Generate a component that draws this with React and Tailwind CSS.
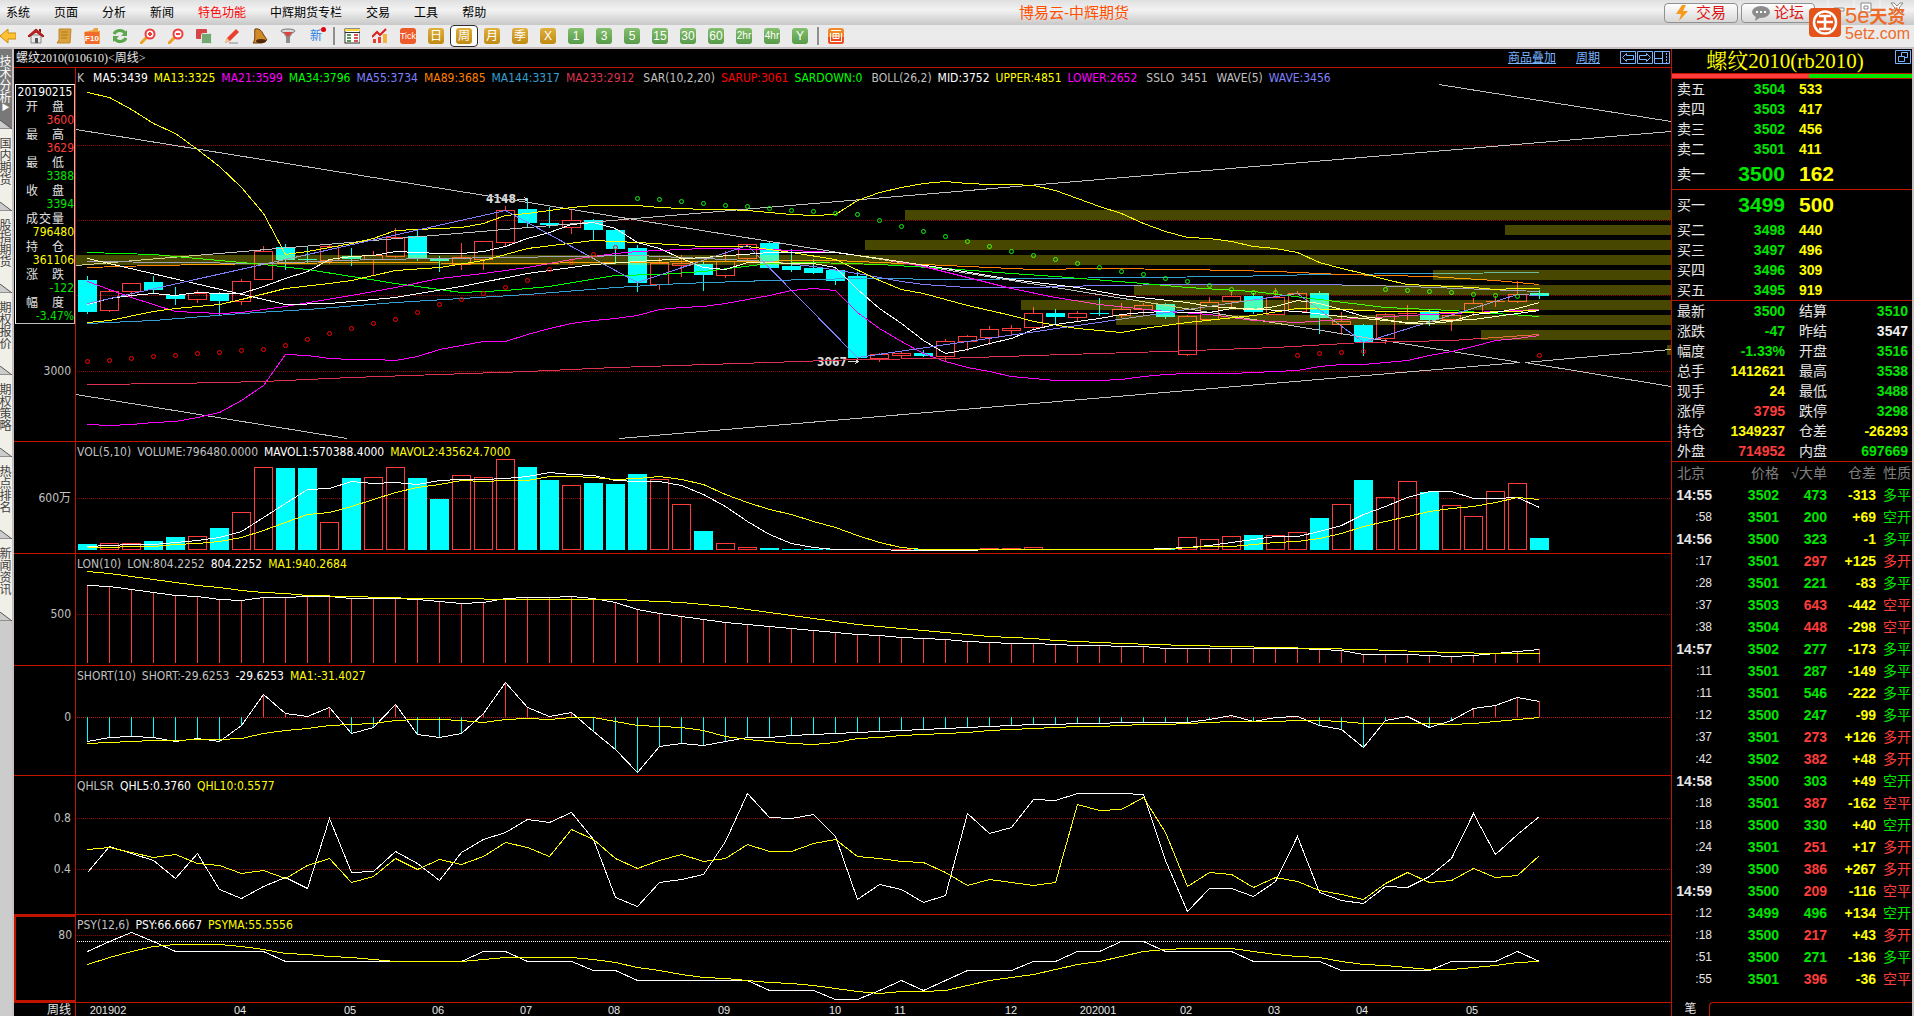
import React, { useState } from "react";
import clsx from "clsx";

const menus = ["系统", "页面", "分析", "新闻", "特色功能", "中辉期货专栏", "交易", "工具", "帮助"];
const sideTabs = ["技术分析", "国内期货", "股指期货", "期权报价", "期权策略", "热点排名", "新闻资讯"];
const goldPeriods = ["日", "周", "月", "季", "X"];
const greenPeriods = ["1", "3", "5", "15", "30", "60", "2hr", "4hr", "Y"];

// x of bar i
const barX = (i) => 87.5 + 22 * i;

// [top, bottom, high, low, 1 = up]
const candles = [
  [280, 312, 276, 313, 0], [291, 310, 290, 311, 1], [283, 291, 283, 297, 1], [282, 290, 276, 293, 0],
  [295, 299, 287, 304, 0], [293, 299, 290, 302, 1], [294, 301, 292, 314, 0], [281, 301, 279, 304, 1],
  [251, 279, 246, 279, 1], [247, 260, 244, 269, 0], [259, 260, 247, 262, 0], [246, 260, 244, 263, 1],
  [256, 259, 248, 265, 0], [255, 259, 251, 275, 1], [237, 256, 228, 257, 1], [236, 258, 231, 260, 0],
  [259, 261, 256, 271, 0], [257, 264, 243, 269, 1], [241, 259, 241, 269, 1], [210, 242, 206, 246, 1],
  [209, 223, 198, 226, 0], [223, 225, 207, 227, 0], [220, 227, 210, 233, 1], [220, 230, 219, 239, 0],
  [230, 249, 228, 263, 0], [248, 283, 245, 291, 0], [263, 284, 258, 289, 1], [263, 265, 255, 276, 1],
  [264, 275, 262, 290, 0], [261, 275, 251, 277, 1], [244, 258, 244, 260, 1], [243, 268, 241, 268, 0],
  [266, 270, 249, 271, 0], [268, 273, 259, 273, 0], [270, 281, 268, 284, 0], [276, 358, 272, 362, 0],
  [354, 358, 353, 361, 1], [353, 355, 351, 357, 1], [353, 356, 350, 356, 0], [341, 356, 339, 360, 1],
  [336, 341, 335, 350, 1], [329, 337, 326, 344, 1], [328, 330, 325, 335, 1], [313, 327, 307, 329, 1],
  [313, 317, 309, 324, 0], [313, 317, 311, 321, 1], [313, 314, 298, 315, 0], [309, 315, 303, 317, 1],
  [305, 309, 303, 315, 1], [304, 317, 303, 318, 0], [316, 354, 315, 355, 1], [302, 319, 297, 319, 1],
  [296, 301, 292, 306, 1], [296, 312, 293, 313, 0], [297, 314, 288, 314, 1], [293, 311, 291, 311, 1],
  [293, 318, 291, 333, 0], [321, 324, 312, 334, 1], [325, 342, 324, 355, 0], [314, 338, 313, 343, 1],
  [313, 314, 305, 319, 1], [311, 320, 310, 325, 0], [315, 319, 313, 330, 1], [303, 312, 298, 315, 1],
  [301, 302, 296, 306, 1], [294, 301, 281, 302, 1], [293, 296, 290, 298, 0],
];

const volumes = [
  544, 543, 543, 541, 537, 536, 528, 512, 467, 468, 468, 522, 478, 477, 467, 478, 499, 475, 477, 459, 467, 480,
  485, 483, 484, 474, 479, 504, 531, 543, 547, 548, 549, 549, 549, 549, 549, 549, 549, 549, 549, 548, 548, 547,
  549, 549, 549, 549, 549, 549, 537, 539, 536, 535, 535, 532, 518, 504, 480, 497, 481, 492, 505, 516, 491, 483, 538,
];

const mainLines = [
  ["#ff00ff", [424, 425, 424, 422, 421, 417, 412, 400, 385, 354, 355, 358, 359, 359, 360, 356, 349, 345, 341, 341, 334, 328, 323, 320, 318, 315, 309, 307, 306, 303, 299, 295, 290, 288, 290, 312, 328, 341, 353, 361, 367, 371, 376, 378, 380, 380, 380, 379, 376, 374, 373, 373, 373, 372, 371, 370, 366, 364, 364, 362, 360, 355, 351, 346, 340, 338, 335]],
  ["#dc3250", { 0: 384, 4: 383, 8: 381, 12: 377, 16: 374, 20: 371, 24: 367, 31: 362, 35: 359, 39: 358, 43: 355, 49: 351, 54: 347, 58: 342, 62: 340, 66: 334 }],
  ["#32a0d2", { 0: 323, 3: 320, 7: 313, 10: 309, 14: 302, 17: 298, 20: 294, 24: 287, 27: 283, 31: 280, 35: 278, 40: 279, 43: 278, 48: 277, 52: 276, 56: 274, 61: 273, 66: 272 }],
  ["#ff8000", { 0: 267, 3: 265, 8: 263, 13: 262, 19: 263, 24: 262, 29: 261, 34: 260, 38: 264, 41: 267, 43: 269, 46: 268, 50: 269, 54: 271, 57: 274, 61: 276, 64: 280, 66: 284 }],
  ["#8080ff", { 0: 261, 8: 263, 13: 259, 25: 255, 28: 258, 31: 261, 33: 266, 35: 273, 37: 281, 38: 284, 40: 287, 43: 287, 46: 285, 50: 284, 56: 284, 60: 286, 66: 291 }],
  ["#00ff00", { 0: 252, 3: 254, 6: 260, 8: 264, 10: 269, 12: 276, 14: 283, 17: 292, 19: 290, 21: 286, 24: 275, 26: 274, 28: 271, 31: 263, 33: 262, 36: 264, 39: 268, 42: 273, 44: 276, 48: 283, 50: 287, 53: 291, 56: 299, 59: 307, 62: 310, 66: 316 }],
  ["#ff00ff", { 0: 281, 2: 297, 4: 311, 6: 313, 7: 312, 9: 306, 12: 295, 14: 287, 16: 278, 18: 273, 20: 267, 22: 259, 24: 253, 25: 251, 28: 248, 31: 249, 34: 252, 36: 258, 38: 266, 40: 277, 42: 288, 44: 297, 46: 304, 49: 311, 51: 314, 53: 320, 55: 322, 57: 319, 60: 315, 63: 312, 66: 309 }],
  ["#ffff00", { 0: 322, 1: 320, 3: 311, 4: 308, 6: 304, 7: 299, 9: 288, 11: 283, 12: 280, 14: 270, 16: 267, 18: 260, 20: 248, 23: 240, 25: 242, 28: 246, 30: 246, 32: 252, 34: 259, 36: 280, 37: 289, 38: 293, 40: 305, 42: 315, 43: 321, 45: 328, 47: 332, 48: 328, 50: 322, 53: 315, 55: 308, 57: 309, 59: 311, 63: 312, 66: 310 }],
  ["#ffffff", { 0: 258, 9: 304, 11: 303, 14: 297, 17: 286, 20: 273, 23: 264, 25: 261, 28: 257, 31: 252, 34: 252, 36: 258, 39: 268, 42: 279, 45: 287, 47: 295, 50: 302, 51: 306, 55: 311, 57: 316, 60: 322, 63: 319, 66: 310 }],
  ["#ffffff", [304, 298, 295, 293, 295, 292, 293, 293, 286, 278, 271, 259, 256, 255, 251, 252, 253, 253, 251, 246, 238, 232, 224, 222, 228, 242, 248, 258, 267, 269, 262, 262, 263, 263, 267, 289, 308, 323, 340, 353, 349, 343, 338, 329, 324, 321, 318, 314, 312, 311, 312, 312, 308, 309, 306, 300, 303, 309, 316, 319, 323, 323, 321, 314, 312, 308, 302]],
  ["#ffff00", [92, 97, 109, 123, 133, 149, 166, 187, 213, 254, 251, 247, 243, 238, 230, 229, 228, 227, 223, 215, 213, 210, 207, 205, 205, 205, 207, 208, 209, 209, 210, 212, 214, 215, 214, 200, 192, 187, 183, 181, 183, 184, 184, 185, 190, 198, 206, 213, 223, 231, 237, 238, 241, 246, 248, 252, 262, 268, 273, 279, 284, 285, 286, 287, 289, 288, 288]],
  ["#8080ff", { 0: 303, 19: 210, 25: 282, 30: 245, 35: 357, 55: 293, 58: 342, 65: 294, 66: 295 }],
];

const trendLines = [
  [76, 129, 1520, 362], [1525, 362, 1671, 386], [76, 265, 1671, 131], [1439, 84, 1671, 121],
  [76, 394, 347, 438], [619, 438, 1520, 362], [1525, 362, 1671, 349],
];

// [left, top] of each price band
const bands = [
  [905, 210], [1505, 225], [865, 240], [76, 255], [1433, 270], [1134, 285], [1021, 300], [1116, 315], [1481, 330], [1667, 345],
];

const sarUp = {
  0: 361, 1: 360, 2: 358, 3: 356, 4: 355, 5: 353, 6: 352, 7: 350, 8: 349, 9: 345, 10: 339, 11: 333, 12: 328, 13: 323,
  14: 319, 15: 312, 16: 304, 17: 299, 18: 293, 19: 287, 20: 280, 21: 269, 22: 262, 23: 254, 24: 247,
  55: 355, 56: 353, 57: 352, 58: 351, 66: 355,
};
const sarDown = {
  25: 198, 26: 199, 27: 201, 28: 203, 29: 205, 30: 206, 31: 208, 32: 210, 33: 211, 34: 213, 35: 214, 36: 220, 37: 226,
  38: 231, 39: 236, 40: 241, 41: 246, 42: 251, 43: 255, 44: 259, 45: 263, 46: 267, 47: 271, 48: 274, 49: 278, 50: 281,
  51: 285, 52: 289, 53: 292, 54: 292, 59: 289, 60: 290, 61: 291, 62: 292, 63: 294, 64: 295, 65: 296,
};

const mavol1 = [546, 545, 544, 544, 542, 540, 537, 531, 517, 503, 489, 488, 481, 483, 482, 484, 480, 479, 479, 478, 476, 472, 474, 475, 480, 481, 481, 485, 494, 506, 521, 534, 543, 547, 549, 549, 549, 550, 550, 550, 550, 549, 549, 549, 549, 549, 549, 549, 549, 548, 547, 545, 542, 539, 536, 536, 531, 525, 514, 506, 497, 491, 491, 498, 498, 497, 507];
const mavol2 = [547, 547, 546, 546, 544, 543, 541, 537, 530, 522, 514, 512, 506, 499, 492, 487, 484, 480, 481, 480, 480, 476, 476, 477, 479, 478, 476, 479, 484, 494, 502, 509, 514, 521, 527, 535, 542, 547, 549, 549, 549, 549, 549, 549, 549, 549, 549, 549, 549, 549, 547, 546, 546, 544, 542, 541, 538, 533, 526, 521, 516, 511, 508, 506, 502, 497, 499];
const lon = [585, 586, 589, 592, 595, 596, 599, 600, 597, 597, 596, 596, 598, 598, 598, 599, 601, 603, 602, 598, 597, 597, 596, 598, 602, 609, 613, 616, 619, 622, 624, 626, 628, 630, 632, 634, 635, 637, 638, 639, 641, 642, 643, 643, 644, 645, 645, 646, 646, 648, 648, 648, 648, 648, 648, 648, 649, 650, 654, 654, 654, 655, 656, 655, 653, 651, 649];
const lonMa = { 0: 571, 1: 573, 2: 576, 3: 579, 4: 582, 5: 585, 6: 587, 7: 590, 8: 592, 9: 593, 10: 595, 12: 596, 15: 598, 17: 598, 19: 599, 24: 599, 25: 600, 27: 602, 28: 604, 29: 606, 30: 609, 31: 612, 32: 615, 33: 618, 34: 621, 35: 624, 36: 626, 37: 628, 38: 630, 39: 632, 40: 634, 41: 636, 43: 638, 44: 640, 47: 643, 50: 645, 56: 648, 58: 649, 62: 652, 64: 653, 66: 653 };
const short = [741, 737, 736, 737, 741, 738, 741, 725, 694, 713, 716, 707, 733, 727, 704, 734, 737, 733, 713, 682, 707, 716, 712, 731, 749, 772, 746, 743, 745, 741, 737, 737, 735, 734, 733, 732, 731, 730, 729, 728, 727, 726, 725, 724, 724, 723, 723, 722, 722, 722, 722, 719, 715, 721, 717, 716, 725, 729, 747, 720, 716, 727, 720, 708, 705, 697, 701];
const shortMa = [743, 742, 741, 740, 740, 739, 739, 738, 733, 730, 728, 725, 724, 723, 720, 719, 719, 720, 722, 719, 718, 719, 717, 717, 721, 725, 726, 727, 730, 736, 739, 741, 743, 744, 742, 738, 737, 735, 734, 733, 732, 730, 729, 728, 727, 726, 726, 725, 724, 724, 723, 722, 721, 721, 721, 720, 720, 721, 723, 723, 723, 723, 724, 723, 721, 719, 717];
const qhl5 = [872, 846, 853, 860, 878, 853, 889, 898, 886, 877, 888, 818, 872, 871, 851, 863, 880, 852, 839, 832, 819, 822, 812, 839, 897, 906, 882, 879, 874, 841, 793, 817, 818, 814, 836, 899, 884, 889, 902, 895, 813, 833, 827, 799, 800, 793, 793, 793, 794, 860, 911, 888, 888, 896, 881, 836, 892, 900, 903, 886, 887, 876, 858, 813, 854, 834, 816];
const qhl10 = [849, 847, 852, 857, 854, 863, 865, 873, 870, 878, 865, 858, 882, 876, 858, 869, 859, 864, 856, 842, 847, 856, 829, 839, 858, 868, 860, 854, 861, 858, 844, 851, 851, 843, 839, 856, 858, 861, 862, 872, 885, 879, 882, 885, 882, 804, 810, 809, 797, 832, 886, 872, 874, 887, 877, 881, 890, 894, 899, 883, 872, 882, 880, 868, 877, 875, 855];
const psy = { 0: 951, 1: 941, 2: 932, 3: 941, 4: 951, 8: 951, 9: 961, 17: 961, 18: 951, 19: 951, 20: 961, 22: 961, 23: 970, 24: 970, 25: 980, 30: 980, 31: 990, 33: 990, 34: 999, 35: 999, 36: 990, 37: 980, 38: 990, 39: 980, 40: 970, 42: 970, 43: 961, 44: 961, 45: 951, 46: 951, 47: 941, 48: 941, 49: 951, 52: 951, 53: 961, 56: 961, 57: 970, 61: 970, 62: 961, 64: 961, 65: 951, 66: 961 };
const psyMa = [964, 957, 951, 946, 944, 944, 944, 946, 949, 953, 954, 956, 957, 959, 961, 961, 961, 961, 959, 957, 957, 957, 957, 959, 962, 967, 970, 974, 977, 978, 980, 982, 983, 985, 988, 991, 993, 991, 991, 990, 985, 980, 977, 974, 969, 964, 961, 956, 951, 949, 948, 948, 948, 951, 954, 956, 957, 961, 964, 965, 967, 969, 969, 967, 965, 962, 961];

const info = [
  ["开盘", "3600", "text-[#ff3c3c]"],
  ["最高", "3629", "text-[#ff3c3c]"],
  ["最低", "3388", "text-[#00e600]"],
  ["收盘", "3394", "text-[#00e600]"],
  ["成交量", "796480", "text-[#ffff00]"],
  ["持仓", "361106", "text-[#ffff00]"],
  ["涨跌", "-122", "text-[#00e600]"],
  ["幅度", "-3.47%", "text-[#00e600]"],
];

const asks = [["卖五", "3504", "533"], ["卖四", "3503", "417"], ["卖三", "3502", "456"], ["卖二", "3501", "411"], ["卖一", "3500", "162"]];
const bids = [["买一", "3499", "500"], ["买二", "3498", "440"], ["买三", "3497", "496"], ["买四", "3496", "309"], ["买五", "3495", "919"]];

const G = "text-[#00e600]";
const R = "text-[#ff3c3c]";
const Y = "text-[#ffff00]";
const W = "text-[#f0f0f0]";

const stats = [
  ["最新", "3500", G, "结算", "3510", G],
  ["涨跌", "-47", G, "昨结", "3547", W],
  ["幅度", "-1.33%", G, "开盘", "3516", G],
  ["总手", "1412621", Y, "最高", "3538", G],
  ["现手", "24", Y, "最低", "3488", G],
  ["涨停", "3795", R, "跌停", "3298", G],
  ["持仓", "1349237", Y, "仓差", "-26293", Y],
  ["外盘", "714952", R, "内盘", "697669", G],
];

const ticks = [
  ["14:55", "3502", "473", "-313", "多平", G], [":58", "3501", "200", "+69", "空开", G],
  ["14:56", "3500", "323", "-1", "多平", G], [":17", "3501", "297", "+125", "多开", R],
  [":28", "3501", "221", "-83", "多平", G], [":37", "3503", "643", "-442", "空平", R],
  [":38", "3504", "448", "-298", "空平", R], ["14:57", "3502", "277", "-173", "多平", G],
  [":11", "3501", "287", "-149", "多平", G], [":11", "3501", "546", "-222", "多平", G],
  [":12", "3500", "247", "-99", "多平", G], [":37", "3501", "273", "+126", "多开", R],
  [":42", "3502", "382", "+48", "多开", R], ["14:58", "3500", "303", "+49", "空开", G],
  [":18", "3501", "387", "-162", "空平", R], [":18", "3500", "330", "+40", "空开", G],
  [":24", "3501", "251", "+17", "多开", R], [":39", "3500", "386", "+267", "多开", R],
  ["14:59", "3500", "209", "-116", "空平", R], [":12", "3499", "496", "+134", "空开", G],
  [":18", "3500", "217", "+43", "多开", R], [":51", "3500", "271", "-136", "多平", G],
  [":55", "3501", "396", "-36", "空平", R],
];

const months = [
  [108, "201902"], [240, "04"], [350, "05"], [438, "06"], [526, "07"], [614, "08"], [724, "09"], [835, "10"],
  [900, "11"], [1011, "12"], [1098, "202001"], [1186, "02"], [1274, "03"], [1362, "04"], [1472, "05"],
];

function Line({ data, color }) {
  const points = Object.entries(data).map(([i, y]) => `${barX(+i)},${y + 0.5}`).join(" ");
  return <polyline points={points} fill="none" stroke={color} />;
}

function Grid({ ys, color = "#960000" }) {
  return ys.map((y) => <path key={y} d={`M77 ${y + 0.5}H1671`} stroke={color} strokeDasharray="1 1" />);
}

function Dots({ data, color }) {
  return Object.entries(data).map(([i, y]) => (
    <circle key={i} cx={barX(+i)} cy={y + 0.5} r="2" fill="none" stroke={color} shapeRendering="geometricPrecision" />
  ));
}

function Bar({ i, top, bottom, up }) {
  const x = 78 + 22 * i;
  if (up && bottom - top > 1) {
    return <rect x={x + 0.5} y={top + 0.5} width="18" height={bottom - top - 0.5} fill="none" stroke="#ff3c3c" />;
  }
  return <rect x={x} y={top} width="19" height={Math.max(bottom - top, 1)} fill={up ? "#ff3c3c" : "#00ffff"} />;
}

// One indicator row: left axis gutter plus the plot
function Panel({ height, top, plot, labels, gutter, active, children }) {
  return (
    <section className={clsx("flex border-b border-[#c01400]", height)}>
      <div
        className={clsx(
          "w-[62px] shrink-0 border-r border-[#c01400] text-right text-[12px] leading-4 text-[#c0c0c0]",
          active && "border-2"
        )}
      >
        {gutter}
      </div>
      <div className="relative min-w-0 flex-1">
        <svg
          className="block h-full w-full"
          viewBox={`76 ${top} 1595 ${plot}`}
          preserveAspectRatio="none"
          shapeRendering="crispEdges"
        >
          {children}
        </svg>
        <div className="absolute left-[1px] top-[2px] flex gap-[6px] whitespace-nowrap text-[12px] leading-4">
          {labels.map(([text, cls]) => (
            <span key={text} className={cls}>{text}</span>
          ))}
        </div>
      </div>
    </section>
  );
}

function ToolButton({ label, active, children }) {
  return (
    <button
      aria-label={label}
      className={clsx(
        "flex h-[22px] w-7 shrink-0 items-center justify-center",
        active && "rounded-sm border border-[#303030] bg-white"
      )}
    >
      {children}
    </button>
  );
}

function Chip({ text, className }) {
  return (
    <span className={clsx("flex h-4 w-4 items-center justify-center rounded-[3px] leading-4 text-white", className)}>
      {text}
    </span>
  );
}

function Icon({ children }) {
  return <svg className="h-4 w-4" viewBox="0 0 16 16">{children}</svg>;
}

function Toolbar() {
  const [period, setPeriod] = useState("周");
  return (
    <div className="flex h-[22px] items-center overflow-hidden bg-[#ebebeb]">
      <div className="-ml-[6px] flex items-center">
        <ToolButton label="后退"><Icon><path d="M0 8l8-7v4h8v6H8v4z" fill="#ffc233" stroke="#c98a10" /></Icon></ToolButton>
        <ToolButton label="首页"><Icon><path d="M3 7h10v8H3z" fill="#e8e8e8" stroke="#888" /><path d="M7 10h3v5H7z" fill="#555" /><path d="M0 8l8-7 8 7-1 1-7-5-7 5z" fill="#c81e1e" stroke="#a01414" /><path d="M11 1h2v4l-2-2z" fill="#8c1010" /></Icon></ToolButton>
        <ToolButton label="笔记"><Icon><path d="M3 1h12l-1 14H1l2-3z" fill="#dba13c" stroke="#c08828" /><path d="M5 4h7M5 7h7M5 10h6" stroke="#b07818" /></Icon></ToolButton>
        <ToolButton label="F10"><Icon><path d="M0 4l9-2 1-2 4 0v3h2v13H1z" fill="#f0a03c" /><rect x="1" y="4" width="14" height="12" fill="#f26a2c" /><text x="8" y="13" textAnchor="middle" fontSize="8" fontWeight="bold" fill="#fff">F10</text></Icon></ToolButton>
        <ToolButton label="刷新"><Icon><path d="M2 6c2-4 8-5 11-1M14 10c-2 4-8 5-11 1" fill="none" stroke="#5aa84b" strokeWidth="3" /><path d="M15 2v6H9zM1 14V8h6z" fill="#5aa84b" /></Icon></ToolButton>
        <ToolButton label="放大"><Icon><path d="M1 15l6-6" stroke="#f0a020" strokeWidth="3" strokeLinecap="round" /><circle cx="10" cy="6" r="4.500" fill="#fff" stroke="#f03c3c" strokeWidth="2" /><path d="M8 6h4M10 4v4" stroke="#f03c3c" strokeWidth="2" /></Icon></ToolButton>
        <ToolButton label="缩小"><Icon><path d="M1 15l6-6" stroke="#f0a020" strokeWidth="3" strokeLinecap="round" /><circle cx="10" cy="6" r="4.500" fill="#fff" stroke="#f03c3c" strokeWidth="2" /><path d="M8 6h4" stroke="#f03c3c" strokeWidth="2" /></Icon></ToolButton>
        <ToolButton label="叠加"><Icon><rect x="0" y="1" width="11" height="10" rx="1" fill="#d84444" /><rect x="5.500" y="5.500" width="10" height="10" rx="1" fill="#72a872" stroke="#dfe8df" /></Icon></ToolButton>
        <ToolButton label="画线"><Icon><path d="M1 15l2-5 9-9 3 3-9 9z" fill="#e8402c" /><path d="M1 15l2-5 3 3z" fill="#f0c890" /><path d="M5 15h9" stroke="#888" /></Icon></ToolButton>
        <ToolButton label="预警"><Icon><path d="M3 1c4-1 7 2 8 5l4 6-5 3H1c3-4 1-9 2-14z" fill="#d08c28" stroke="#6e3c08" /><ellipse cx="9" cy="13" rx="5" ry="2" fill="#502808" /></Icon></ToolButton>
        <ToolButton label="筛选"><Icon><path d="M1 2h14l-5 7v6H6V9z" fill="#8c8c8c" /><ellipse cx="8" cy="3" rx="7" ry="2" fill="#d8d8d8" stroke="#777" /><path d="M4 4h8l-4 5z" fill="#e83c3c" /></Icon></ToolButton>
        <ToolButton label="新">
          <span className="relative text-[12px] leading-4 text-[#2a82e4]">
            新
            <i className="absolute -right-1 -top-[1px] h-[5px] w-[5px] rounded-full bg-red-600" />
          </span>
        </ToolButton>
        <span className="mx-[3px] h-[18px] w-[2px] bg-[#909090]" />
        <ToolButton label="报价"><Icon><rect x="1" y="1" width="15" height="14" fill="#fff" stroke="#303030" /><path d="M1 2h15" stroke="#ffd83c" strokeWidth="2" /><path d="M1 4.500h15" stroke="#303030" /><path d="M3 7h4M3 10h4M3 13h4" stroke="#1c7a1c" strokeWidth="1.500" /><path d="M10 7h4M10 10h4M10 13h4" stroke="#c81e1e" strokeWidth="1.500" /></Icon></ToolButton>
        <ToolButton label="走势"><Icon><path d="M1 11h3v4H1zM6 9h3v6H6z" fill="#e84030" /><path d="M11 6h4v9h-4z" fill="#f0b43c" /><path d="M0 9l5-5 3 3 6-6" fill="none" stroke="#dc1e1e" strokeWidth="2" /></Icon></ToolButton>
        <ToolButton label="Tick"><Chip text="Tick" className="bg-[#ee5a2a] text-[9px]" /></ToolButton>
        {goldPeriods.map((p) => (
          <button
            key={p}
            onClick={() => setPeriod(p)}
            className={clsx(
              "flex h-[22px] w-7 shrink-0 items-center justify-center",
              period === p && "rounded border border-[#303030] bg-white"
            )}
          >
            <Chip text={p} className="bg-linear-to-b from-[#e0b03c] to-[#c08a10] text-[12px]" />
          </button>
        ))}
        {greenPeriods.map((p) => (
          <button key={p} onClick={() => setPeriod(p)} className="flex h-[22px] w-7 shrink-0 items-center justify-center">
            <Chip
              text={p}
              className={clsx("bg-linear-to-b from-[#86c06e] to-[#569a48]", p.length > 2 ? "text-[10px]" : "text-[12px]")}
            />
          </button>
        ))}
        <span className="mx-[3px] h-[18px] w-[2px] bg-[#909090]" />
        <ToolButton label="画面">
          <Icon>
            <rect width="16" height="16" rx="3" fill="#f08a28" />
            <path d="M0 9h16v4q0 3-3 3H3q-3 0-3-3z" fill="#ee4c22" />
            <path d="M3 2.500h10M2.500 5v8.500h11V5M5 5.500h6v5H5zM8 5v6M5 8h6" fill="none" stroke="#fff" />
          </Icon>
        </ToolButton>
      </div>
    </div>
  );
}

function Header() {
  return (
    <header className="relative">
      <nav className="flex h-[25px] items-center bg-linear-to-b from-[#e0e0e0] via-[#f2f2f2] via-40% to-[#c8c8c8] pl-[6px] pr-[99px] text-[12px] text-black">
        <div className="flex w-[56%] gap-6">
          {menus.map((m) => (
            <button key={m} className={clsx("whitespace-nowrap", m === "特色功能" && "text-[#ff0000]")}>{m}</button>
          ))}
        </div>
        <h1 className="whitespace-nowrap text-[15px] leading-5 text-[#ff5000]">博易云-中辉期货</h1>
        <div className="ml-auto flex gap-[3px] text-[15px] leading-4 text-[#dc1414]">
          <button className="flex h-5 w-[74px] items-center justify-center gap-2 rounded border border-[#909090] bg-linear-to-b from-white to-[#d8d8d8]">
            <svg className="h-4 w-3" viewBox="0 0 12 16"><path d="M6 0L0 9h5l-2 7 9-10H7l3-6z" fill="#f79a1e" /></svg>
            交易
          </button>
          <button className="flex h-5 w-[74px] items-center justify-center gap-1 rounded border border-[#909090] bg-linear-to-b from-white to-[#d8d8d8]">
            <svg className="h-4 w-[18px]" viewBox="0 0 18 16">
              <ellipse cx="9" cy="7" rx="9" ry="6" fill="#8c8c8c" />
              <path d="M4 11l-1 5 6-4z" fill="#8c8c8c" />
              <path d="M4 6h2v2H4zM8 6h2v2H8zM12 6h2v2h-2z" fill="#fff" />
            </svg>
            论坛
          </button>
        </div>
      </nav>
      <Toolbar />
      <div className="h-[2px] bg-[#c8c0c0]" />
      {/* window buttons sit behind the brand mark */}
      <svg className="absolute right-0 top-0 h-6 w-[96px]" viewBox="0 0 96 24">
        <path d="M10 0v20M36 0v20M62 0v20" stroke="#f4f4f4" />
        <path d="M16 8h10v3H16z" fill="#fff" stroke="#888" />
        <path d="M43 3h10v9H43zM46 6h4v3h-4z" fill="#fff" stroke="#888" />
        <path d="M73 3h3l3 3 3-3h3l-4 5 4 5h-3l-3-3-3 3h-3l4-5z" fill="#fff" stroke="#888" />
      </svg>
      <div className="absolute right-[4px] top-[5px] flex items-center gap-1 text-[#ee6a28]">
        <svg className="h-[29px] w-8" viewBox="0 0 32 29">
          <rect width="32" height="29" rx="4" fill="#e4541a" />
          <circle cx="16" cy="14.500" r="11" fill="none" stroke="#fff" strokeWidth="2.500" />
          <path d="M10 8h12M8 14h16M16 8v14M10 21h12" fill="none" stroke="#fff" strokeWidth="2.500" />
        </svg>
        <div>
          <div className="text-[22px] leading-[22px]">5e<b className="text-[18px]">天资</b></div>
          <div className="text-[16px] leading-[12px]">5etz.com</div>
        </div>
      </div>
    </header>
  );
}

function SideTabs() {
  return (
    <aside className="w-[12px] shrink-0 overflow-hidden bg-[#cccccc] text-[12px]">
      {sideTabs.map((t, i) => (
        <div key={t} className={clsx("flex flex-col items-start", i === 0 ? "h-[82px] bg-[#787878] text-white" : "h-[82px] bg-[#f0efe8] text-[#404040]")}>
          <button className="-ml-[3px] flex-1 whitespace-nowrap pt-2 text-left leading-[13px] [text-orientation:upright] [writing-mode:vertical-rl]">
            {t}{i === 0 && <span className="text-[8px]">▶</span>}
          </button>
          <svg className="h-[9px] w-3" viewBox="0 0 12 9"><path d="M0 0l12 9H0z" fill="#cccccc" /><path d="M0 0l12 9H0" fill="none" stroke="#555" /></svg>
        </div>
      ))}
    </aside>
  );
}

function ChartArea() {
  return (
    <main className="flex min-w-0 flex-1 flex-col font-['DejaVu_Sans_Condensed','Noto_Sans_CJK_SC',sans-serif]">
      <div className="flex h-[19px] items-center border-b border-[#c01400] pl-[2px] font-['Liberation_Serif','Noto_Sans_CJK_SC',serif] text-[12px] leading-4 text-[#e6e6e6]">
        <span className="flex-1">螺纹2010(010610)&lt;周线&gt;</span>
        <div className="flex items-center gap-5 text-[#78b4ff] underline">
          <a href="#overlay">商品叠加</a>
          <a href="#period">周期</a>
          <svg className="h-4 w-[51px]" viewBox="0 0 51 16" fill="none" stroke="#78b4ff">
            <path d="M.5 1.500h15v12H.5zM17.500 1.500h15v12h-15zM34.500 1.500h15v12h-15z" />
            <path d="M2.500 7.500l4-4v2h7v4h-7v2zM30.500 7.500l-4-4v2h-7v4h7v2z" />
            <path d="M42.500 2v11M35 8.500h7" />
            <path d="M46.500 3v10" strokeDasharray="2 1" />
          </svg>
        </div>
      </div>

      <Panel
        height="h-[374px]"
        top={68}
        plot={373}
        labels={[
          ["K", "pr-[3px] text-[#c0c0c0]"], ["MA5:3439", "text-white"], ["MA13:3325", "text-[#ffff00]"], ["MA21:3599", "text-[#ff00ff]"],
          ["MA34:3796", "text-[#00ff00]"], ["MA55:3734", "text-[#8080ff]"], ["MA89:3685", "text-[#ff8000]"],
          ["MA144:3317", "text-[#32a0d2]"], ["MA233:2912", "pr-[3px] text-[#dc3250]"], ["SAR(10,2,20)", "text-[#c0c0c0]"],
          ["SARUP:3061", "text-[#ff0000]"], ["SARDOWN:0", "pr-[3px] text-[#00ff00]"], ["BOLL(26,2)", "text-[#c0c0c0]"],
          ["MID:3752", "text-white"], ["UPPER:4851", "text-[#ffff00]"], ["LOWER:2652", "pr-[3px] text-[#ff00ff]"],
          ["SSLO", "text-[#c0c0c0]"], ["3451", "pr-[3px] text-[#c0c0c0]"], ["WAVE(5)", "text-[#c0c0c0]"], ["WAVE:3456", "text-[#8080ff]"],
        ]}
        gutter={
          <>
            <div className="ml-[1px] mt-4 h-[240px] border border-b-[#c0c0c0] border-l-white border-r-[#c0c0c0] border-t-white">
              <div className="h-[15px] whitespace-nowrap text-center leading-[15px] text-white">20190215</div>
              {info.map(([label, value, cls]) => (
                <dl key={label}>
                  <dt className="flex h-[14px] justify-between px-[10px] leading-[14px] text-[#e0e0e0]">
                    {[...label].map((c) => <span key={c}>{c}</span>)}
                  </dt>
                  <dd className={clsx("h-[14px] leading-[12px]", cls)}>{value}</dd>
                </dl>
              ))}
            </div>
            <div className="mt-[39px] pr-1">3000</div>
          </>
        }
      >
        <Grid ys={[145, 220, 295, 371]} />
        {candles.map(([t, b, h, l, up], i) => (
          <g key={i}>
            <path
              d={up ? `M${barX(i)} ${h}V${t}M${barX(i)} ${b}V${l + 1}` : `M${barX(i)} ${h}V${l + 1}`}
              stroke={up ? "#ff3c3c" : "#00ffff"}
            />
            <Bar i={i} top={t} bottom={b} up={up} />
          </g>
        ))}
        <text x="486" y="203" fontSize="12" fontWeight="bold" fill="#d8d8d8">4148</text>
        <path d="M517 199.500h10M524 197l3 2.500-3 2.500" fill="none" stroke="#d8d8d8" />
        <text x="817" y="366" fontSize="12" fontWeight="bold" fill="#d8d8d8">3067</text>
        <path d="M848 361.500h10M855 359l3 2.500-3 2.500" fill="none" stroke="#d8d8d8" />
        {trendLines.map(([x1, y1, x2, y2]) => (
          <path key={`${x1}-${y2}`} d={`M${x1} ${y1 + 0.5}L${x2} ${y2 + 0.5}`} stroke="#c0c0c0" />
        ))}
        {mainLines.map(([color, data], i) => <Line key={i} data={data} color={color} />)}
        <Dots data={sarUp} color="#ff0000" />
        <Dots data={sarDown} color="#00ff00" />
        {bands.map(([x, y]) => (
          <rect key={y} x={x} y={y} width={1671 - x} height="10" fill="#ffff00" fillOpacity="0.28" />
        ))}
      </Panel>

      <Panel
        height="h-28"
        top={442}
        plot={111}
        labels={[
          ["VOL(5,10)", "text-[#c0c0c0]"], ["VOLUME:796480.0000", "text-[#c0c0c0]"],
          ["MAVOL1:570388.4000", "text-white"], ["MAVOL2:435624.7000", "text-[#ffff00]"],
        ]}
        gutter={<div className="pr-1 pt-12">600万</div>}
      >
        <Grid ys={[498]} />
        {volumes.map((v, i) => <Bar key={i} i={i} top={v} bottom={candles[i][4] ? 549 : 550} up={candles[i][4]} />)}
        <Line data={mavol1} color="#ffffff" />
        <Line data={mavol2} color="#ffff00" />
      </Panel>

      <Panel
        height="h-28"
        top={554}
        plot={111}
        labels={[
          ["LON(10)", "text-[#c0c0c0]"], ["LON:804.2252", "text-[#c0c0c0]"], ["804.2252", "text-white"], ["MA1:940.2684", "text-[#ffff00]"],
        ]}
        gutter={<div className="pr-1 pt-[52px]">500</div>}
      >
        <Grid ys={[614]} />
        {lon.map((v, i) => <path key={i} d={`M${barX(i)} ${v}V663`} stroke="#ff3c3c" />)}
        <Line data={lon} color="#ffffff" />
        <Line data={lonMa} color="#ffff00" />
      </Panel>

      <Panel
        height="h-[110px]"
        top={666}
        plot={109}
        labels={[
          ["SHORT(10)", "text-[#c0c0c0]"], ["SHORT:-29.6253", "text-[#c0c0c0]"], ["-29.6253", "text-white"], ["MA1:-31.4027", "text-[#ffff00]"],
        ]}
        gutter={<div className="pr-1 pt-[43px]">0</div>}
      >
        <Grid ys={[717]} color="#c81414" />
        {short.map((v, i) => <path key={i} d={`M${barX(i)} 717V${v}`} stroke={v < 717 ? "#ff3c3c" : "#00ffff"} />)}
        <Line data={short} color="#ffffff" />
        <Line data={shortMa} color="#ffff00" />
      </Panel>

      <Panel
        height="h-[139px]"
        top={776}
        plot={138}
        labels={[["QHLSR", "text-[#c0c0c0]"], ["QHL5:0.3760", "text-white"], ["QHL10:0.5577", "text-[#ffff00]"]]}
        gutter={
          <div className="flex flex-col gap-[35px] pr-1 pt-[34px]">
            <span>0.8</span>
            <span>0.4</span>
          </div>
        }
      >
        <Grid ys={[818, 869]} />
        <Line data={qhl5} color="#ffffff" />
        <Line data={qhl10} color="#ffff00" />
      </Panel>

      <Panel
        height="h-[88px]"
        top={915}
        plot={87}
        active
        labels={[["PSY(12,6)", "text-[#c0c0c0]"], ["PSY:66.6667", "text-white"], ["PSYMA:55.5556", "text-[#ffff00]"]]}
        gutter={<div className="pr-[3px] pt-[10px]">80</div>}
      >
        <Grid ys={[935]} />
        <Grid ys={[941]} color="#ffffff" />
        <Line data={psy} color="#ffffff" />
        <Line data={psyMa} color="#ffff00" />
      </Panel>

      <div className="flex h-[13px] overflow-hidden font-['Liberation_Sans','Noto_Sans_CJK_SC',sans-serif] text-[12px] leading-[15px] text-[#e6e6e6]">
        <div className="w-[62px] shrink-0 border-r border-[#c01400] pr-1 text-right">周线</div>
        <div className="relative flex-1">
          {months.map(([x, m]) => (
            <span key={x} className="absolute -translate-x-1/2 text-[11px]" style={{ left: `${((x - 76) / 1595) * 100}%` }}>{m}</span>
          ))}
        </div>
      </div>
    </main>
  );
}

function BookRows({ rows, best }) {
  return rows.map(([label, price, qty]) => (
    <tr key={label} className={label === best ? "h-[30px]" : "h-5"}>
      <th className="w-11 p-0 pl-[5px] text-left text-[14px] font-normal text-[#e6e6e6]">{label}</th>
      <td className={clsx("w-[69px] p-0 text-right", G, label === best && "text-[21px]")}>{price}</td>
      <td className={clsx("p-0 pl-[14px]", Y, label === best && "text-[21px]")}>{qty}</td>
    </tr>
  ));
}

function QuotePanel() {
  return (
    <aside className="flex w-[241px] shrink-0 flex-col border-l border-[#c01400] text-[14px] leading-5">
      <div className="relative h-6 pr-[14px] text-center font-['Liberation_Serif','Noto_Serif_CJK_SC','Noto_Sans_CJK_SC',serif] text-[21px] leading-6 text-[#ffff00]">
        螺纹2010(rb2010)
        <button aria-label="还原" className="absolute right-[1px] top-[1px]">
          <svg className="h-[14px] w-4" viewBox="0 0 16 14" fill="none" stroke="#78b4ff">
            <path d="M.5.500h15v13H.5zM6.500 2.500h6v5h-6z" />
            <path d="M3.500 6.500h6v5h-6z" fill="#000" />
          </svg>
        </button>
      </div>
      <div className="flex h-[6px] border-y border-[#c01400]">
        <div className="w-[57%] bg-[#ff3c3c]" />
        <div className="flex-1 bg-[#00e600]" />
      </div>
      <table className="w-full table-fixed font-bold">
        <tbody><BookRows rows={asks} best="卖一" /></tbody>
      </table>
      <table className="w-full table-fixed border-y border-[#c01400] font-bold">
        <tbody><BookRows rows={bids} best="买一" /></tbody>
      </table>
      <table className="w-full border-b border-[#c01400] font-bold">
        <tbody>
          {stats.map(([a, av, ac, b, bv, bc]) => (
            <tr key={a} className="h-5">
              <th className="w-10 p-0 pl-[5px] text-left font-normal text-[#e6e6e6]">{a}</th>
              <td className={clsx("w-[73px] p-0 text-right", ac)}>{av}</td>
              <th className="w-[50px] p-0 pl-[14px] text-left font-normal text-[#e6e6e6]">{b}</th>
              <td className={clsx("p-0 pr-1 text-right", bc)}>{bv}</td>
            </tr>
          ))}
        </tbody>
      </table>
      <table className="w-full table-fixed text-right font-bold leading-[22px]">
        <thead>
          <tr className="h-[22px] whitespace-nowrap text-[#808080]">
            <th className="w-[40px] p-0 pl-[5px] text-left font-normal">北京</th>
            <th className="w-[67px] p-0 font-normal">价格</th>
            <th className="w-12 p-0 font-normal">√大单</th>
            <th className="w-[49px] p-0 font-normal">仓差</th>
            <th className="p-0 pr-[1px] font-normal">性质</th>
          </tr>
        </thead>
        <tbody>
          {ticks.map(([time, price, qty, diff, kind, cls], i) => (
            <tr key={i} className="h-[22px]">
              <td className={clsx("p-0 text-[#e6e6e6]", time[0] === ":" && "text-[12px] font-normal")}>{time}</td>
              <td className={clsx("p-0", G)}>{price}</td>
              <td className={clsx("p-0", cls)}>{qty}</td>
              <td className={clsx("p-0", Y)}>{diff}</td>
              <td className={clsx("whitespace-nowrap p-0 pr-[1px] font-normal", cls)}>{kind}</td>
            </tr>
          ))}
        </tbody>
      </table>
      <div className="mt-auto flex h-[14px] overflow-hidden text-[12px] leading-[15px] text-[#e6e6e6]">
        <button className="w-[37px] shrink-0">笔</button>
        <div className="flex-1 rounded-tl-sm border-l border-t border-[#c01400]" />
      </div>
    </aside>
  );
}

export default function App() {
  return (
    <div className="flex min-h-screen flex-col bg-black font-['Liberation_Sans','Noto_Sans_CJK_SC',sans-serif]">
      <Header />
      <div className="-mt-[2px] flex flex-1">
        <SideTabs />
        <div className="flex min-w-0 flex-1 border-x-2 border-t-2 border-[#c8c0c0]">
          <ChartArea />
          <QuotePanel />
        </div>
      </div>
    </div>
  );
}
